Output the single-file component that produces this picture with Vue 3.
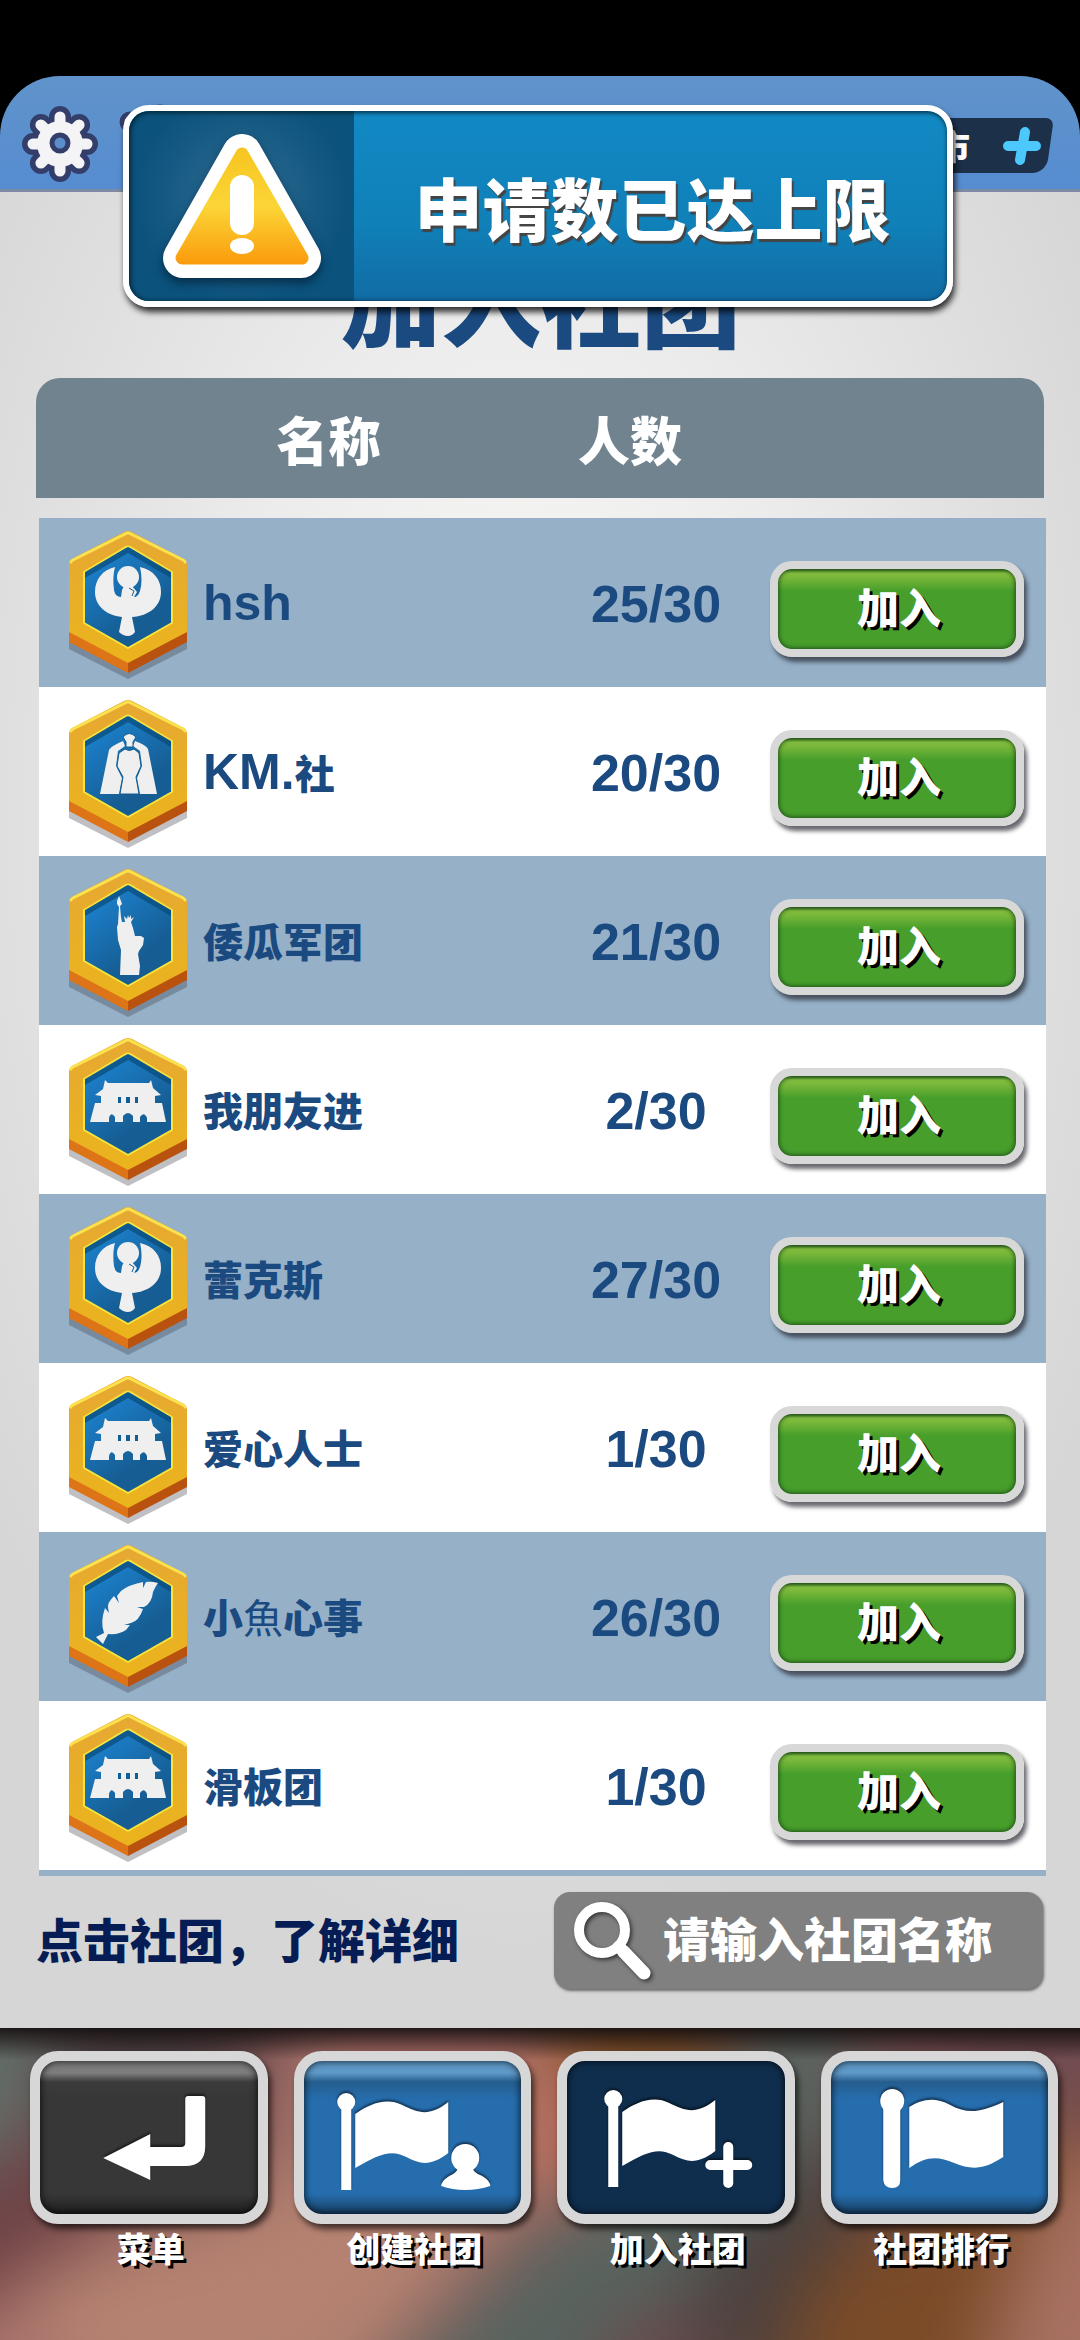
<template>
  <div class="club-page" lang="zh-CN">
    <div class="screen">
      <header class="top-bar">
        <div class="top-left">
          <button class="icon-btn" type="button" aria-label="设置">
            <svg viewBox="0 0 80 80">
              <g stroke="#333f6a" stroke-width="22" stroke-linecap="round">
                <line v-for="a in gearAngles" :key="a" x1="40" y1="40" x2="40" y2="13" :transform="`rotate(${a} 40 40)`" />
              </g>
              <circle cx="40" cy="40" r="28" fill="#333f6a" />
              <g stroke="#f4f4f6" stroke-width="11" stroke-linecap="round">
                <line v-for="a in gearAngles" :key="a" x1="40" y1="40" x2="40" y2="13" :transform="`rotate(${a} 40 40)`" />
              </g>
              <circle cx="40" cy="40" r="23" fill="#f4f4f6" />
              <circle cx="40" cy="39" r="8" fill="#5b8fcb" stroke="#333f6a" stroke-width="5" />
            </svg>
          </button>
          <button class="icon-btn" type="button" aria-label="消息">
            <svg viewBox="0 0 80 80">
              <g fill="#f4f4f6" stroke="#333f6a" stroke-width="5">
                <circle cx="42" cy="44" r="30" />
                <circle cx="12" cy="18" r="8" />
                <circle cx="42" cy="13" r="10" />
              </g>
            </svg>
          </button>
        </div>
        <button class="city" type="button">
          <span>市</span>
          <svg class="plus" viewBox="0 0 40 40">
            <path d="M23 6 18 34M6 20H34" stroke="#4cc8fc" stroke-width="10" stroke-linecap="round" />
          </svg>
        </button>
      </header>

      <main class="panel">
        <h1>加入社团</h1>
        <div class="list">
          <table>
            <colgroup>
              <col class="col-badge" />
              <col />
              <col class="col-count" />
              <col class="col-join" />
            </colgroup>
            <thead>
              <tr>
                <th colspan="2" class="th-name">名称</th>
                <th class="th-count">人数</th>
                <th></th>
              </tr>
            </thead>
            <tbody>
              <tr v-for="(club, i) in clubs" :key="i">
                <td class="badge-cell">
                  <svg class="badge" viewBox="0 0 118 150">
                    <path d="M0 48 59 78 118 48V119L59 149 0 119Z" fill="rgba(60,60,70,0.32)" />
                    <path d="M0 40H59V143L0 112Z" fill="#dd7418" />
                    <path d="M118 40H59V143L118 112Z" fill="#b9520f" />
                    <path d="M55 2Q59 0 63 2L115 29Q118 31 118 34V102L59 133 0 102V34Q0 31 3 29Z" fill="url(#gold)" />
                    <path d="M2 32Q2 31 4 30L56 4Q59 2 62 4L114 30Q116 31 116 32" fill="none" stroke="#fbe24e" stroke-width="3" stroke-linecap="round" />
                    <path d="M55 18Q59 15 63 18L103 42V93L59 118 15 93V42Z" fill="url(#blue)" stroke="#f8e43c" stroke-width="2" stroke-linejoin="round" />
                    <path d="M59 17 102 42V48L59 23 16 48V42Z" fill="#084a78" opacity="0.7" />
                    <g fill="#efeff0">
                      <template v-if="club.badge === 'eagle'">
                        <circle cx="59" cy="47" r="11" />
                        <path d="M46 37C33 40 26 50 26 62C26 76 37 85 53 87L50 102Q54 106 59 106 63 106 66 102L63 87C80 86 92 76 92 62C92 50 85 40 71 37C73 46 73 54 71 61Q69 67 65 67L68 62 63 56H55L53 60 52 67Q46 67 45 60C44 52 44 44 46 37Z" />
                        <path d="M60 58 65 61 63 66" fill="none" stroke="#125d92" stroke-width="1" />
                      </template>
                      <template v-else-if="club.badge === 'robe'">
                        <path d="M31 95 40 51Q42 47 54 42L56 47 49 52 47 67 53 79 50 95ZM88 95 79 50Q77 46 66 42L64 47 71 52 73 67 68 79 71 95Z" />
                        <path d="M56 50 50 54 48 67 54 78 51 95H70L67 78 72 67 70 54 65 50Q60 53 56 50Z" stroke="#125d92" stroke-width="1" />
                        <path d="M54 38Q60 31 67 38L64 43V48H57V43Z" stroke="#125d92" stroke-width="1" />
                      </template>
                      <path
                        v-else-if="club.badge === 'liberty'"
                        d="M50 28 52 33 53 36 51 38 52 49 53 54 56 54 55 48 58 51 59 47 60 50 62 47 62 51 65 49 62 54 64 60 66 68 72 68 75 70 74 77 70 83 69 86 71 98 70 107H51L52 82 49 72 48 59 49 56 50 39 48 36V33Z"
                      />
                      <template v-else-if="club.badge === 'gate'">
                        <path d="M36 43 39 46H80L82 43 84 51 92 58 86 59V66H93L97 85H78V81Q75 74 71 80V85H64V79Q59 73 54 79V85H46V80Q42 74 40 81V85H21L26 66H32V59L26 58 34 52Z" />
                        <path d="M49 60h3v6h-3zM57 60h4v6h-4zM66 60h3v6h-3z" fill="#125d92" />
                      </template>
                      <path
                        v-else
                        d="M89 39Q82 37 77 38L74 44 74 38Q59 41 52 47L48 52 50 59 45 52Q38 59 39 64L40 69 36 64Q31 78 35 89L27 93 34 100 39 90Q50 91 57 86L61 81 55 81 62 79Q70 77 74 65L68 63 75 63Q83 59 84 48Q86 43 89 39Z"
                      />
                    </g>
                  </svg>
                </td>
                <td class="name">
                  <span v-for="(part, k) in club.name" :key="k" :class="part.type">{{ part.text }}</span>
                </td>
                <td class="count">{{ club.members }}/30</td>
                <td class="join-cell">
                  <button class="join" type="button">加入</button>
                </td>
              </tr>
              <tr class="next-row">
                <td></td>
                <td></td>
                <td></td>
                <td></td>
              </tr>
            </tbody>
          </table>
        </div>
        <div class="panel-footer">
          <p>点击社团，了解详细</p>
          <label class="search">
            <svg viewBox="0 0 90 90">
              <g fill="none" stroke="#fff" stroke-width="10" stroke-linecap="round">
                <circle cx="34" cy="34" r="23" />
                <path d="M50 50 51 51" />
                <path d="M55 55 76 77" stroke-width="13" />
              </g>
            </svg>
            <input v-model="keyword" type="text" placeholder="请输入社团名称" aria-label="社团名称" />
          </label>
        </div>
      </main>

      <nav class="bottom-nav">
        <!-- out-of-focus photo behind the buttons -->
        <svg class="nav-bg" viewBox="0 0 1080 312" preserveAspectRatio="none" aria-hidden="true">
          <rect width="1080" height="312" fill="#7c5254" />
          <g filter="url(#soft)">
            <path d="M-80-60H50L40 90 10 160-80 180Z" fill="#63706a" />
            <path d="M50-60H270L210 70 120 120 50 90Z" fill="#4f4346" />
            <path d="M-80 170 60 90 140 190-80 400Z" fill="#6e4246" />
            <path d="M-80 400V320L90 210 280 150 300-20 420-60 560 20 580 130 480 230 330 400Z" fill="#b58271" />
            <path d="M-80 400 20 270 90 400Z" fill="#a8706c" />
            <path d="M330-60H530V60L430 90 320 50Z" fill="#b3716d" />
            <path d="M550-60H730L710 50 560 50Z" fill="#84521f" />
            <path d="M520 50H620V170H520Z" fill="#b2685a" />
            <path d="M340 400 560 190 740 80 740-60H860L850 110 720 230 620 400Z" fill="#57645f" />
            <path d="M600 400 730 190 850 90 880 230 760 400Z" fill="#4a403e" />
            <path d="M570 400 620 290 700 280 720 400Z" fill="#6b484a" />
            <path d="M760 400 810 240 1010 110 1160 100V260L930 400Z" fill="#7b4b28" />
            <path d="M970 400 1010 250 1050 140 1160 100V400Z" fill="#a87162" />
            <path d="M950-60H1160V90H970Z" fill="#714c50" />
          </g>
        </svg>
        <div v-for="item in navItems" :key="item.icon" class="nav-item">
          <button :id="'nav-' + item.icon" type="button" :class="item.icon">
            <svg viewBox="10 10 217 153">
              <path
                v-if="item.icon === 'back'"
                d="M73 107 120 83V96H151Q155 96 155 92V48Q155 45 158 45H172Q175 45 175 48V95Q175 115 155 115H120V129Z"
              />
              <template v-else-if="item.icon === 'create'">
                <circle cx="52" cy="51" r="9" />
                <path d="M47 55H57V139H47Z" />
                <path d="M61 63C75 53 92 46 108 54S135 66 154 51V102C137 115 127 114 112 106S85 103 61 117Z" />
                <circle cx="171" cy="107" r="14" />
                <path d="M164 116H178Q179 122 188 125 196 130 196 135 184 139 171 139T147 135Q147 130 155 125 163 122 164 116Z" />
              </template>
              <template v-else-if="item.icon === 'join-club'">
                <circle cx="56" cy="48" r="9" />
                <path d="M51 52H61V136H51Z" />
                <path d="M65 61C79 51 96 44 112 52S139 64 158 49V100C141 113 131 112 116 104S89 101 65 115Z" />
                <path d="M171 96V132M153 114H190" stroke="#fff" stroke-width="10" stroke-linecap="round" />
              </template>
              <template v-else>
                <circle cx="71" cy="50" r="12" />
                <path d="M62 56H79V129Q79 137 71 137T62 129Z" />
                <path d="M88 56C100 49 112 45 129 54S158 62 182 51V106C162 119 150 119 133 112S105 105 88 117Z" />
              </template>
            </svg>
          </button>
          <label :for="'nav-' + item.icon">{{ item.label }}</label>
        </div>
      </nav>
    </div>

    <div class="toast" role="alert">
      <div class="toast-icon">
        <svg viewBox="0 0 160 144">
          <path d="M80 20 139 124H21Z" fill="#fff" stroke="#fff" stroke-width="40" stroke-linejoin="round" />
          <path d="M80 20 140 124H20Z" fill="url(#warn)" stroke="url(#warn)" stroke-width="13" stroke-linejoin="round" />
          <rect x="68" y="41" width="24" height="60" rx="12" fill="#fff" />
          <ellipse cx="80" cy="112" rx="12" ry="8" fill="#fff" />
        </svg>
      </div>
      <div class="toast-text">申请数已达上限</div>
    </div>

    <!-- shared gradients -->
    <svg class="defs" width="0" height="0" aria-hidden="true">
      <defs>
        <linearGradient id="gold" x1="0" y1="0" x2="0" y2="1">
          <stop offset="0" stop-color="#e6a833" />
          <stop offset="1" stop-color="#ebb41c" />
        </linearGradient>
        <linearGradient id="blue" x1="0" y1="0" x2="0.5" y2="0.8">
          <stop offset="0" stop-color="#1d88d8" />
          <stop offset="1" stop-color="#165d93" />
        </linearGradient>
        <linearGradient id="warn" gradientUnits="userSpaceOnUse" x1="0" y1="14" x2="0" y2="131">
          <stop offset="0" stop-color="#f6c521" />
          <stop offset="0.5" stop-color="#fbd536" />
          <stop offset="1" stop-color="#fb9a0c" />
        </linearGradient>
        <filter id="soft" x="-20%" y="-20%" width="140%" height="140%" color-interpolation-filters="sRGB">
          <feGaussianBlur stdDeviation="38" />
        </filter>
      </defs>
    </svg>
  </div>
</template>

<script setup>
import { ref } from 'vue'

const keyword = ref('')

const gearAngles = [0, 45, 90, 135, 180, 225, 270, 315]

const clubs = [
  { badge: 'eagle', name: [{ text: 'hsh', type: 'latin' }], members: 25 },
  { badge: 'robe', name: [{ text: 'KM.', type: 'latin' }, { text: '社' }], members: 20 },
  { badge: 'liberty', name: [{ text: '倭瓜军团' }], members: 21 },
  { badge: 'gate', name: [{ text: '我朋友进' }], members: 2 },
  { badge: 'eagle', name: [{ text: '蕾克斯' }], members: 27 },
  { badge: 'gate', name: [{ text: '爱心人士' }], members: 1 },
  { badge: 'feather', name: [{ text: '小' }, { text: '魚', type: 'thin' }, { text: '心事' }], members: 26 },
  { badge: 'gate', name: [{ text: '滑板团' }], members: 1 }
]

const navItems = [
  { icon: 'back', label: '菜单' },
  { icon: 'create', label: '创建社团' },
  { icon: 'join-club', label: '加入社团' },
  { icon: 'rank', label: '社团排行' }
]
</script>

<style>
body {
  background: #000;
}
</style>

<style scoped>
* {
  box-sizing: border-box;
}

.club-page {
  position: relative;
  display: flex;
  height: 100vh;
  padding-top: 76px;
  background: #000;
  font-family: "Liberation Sans", "Noto Sans CJK SC", sans-serif;
  font-weight: 900;
}

button,
input {
  font: inherit;
  border: 0;
  padding: 0;
}

svg {
  display: block;
}

.screen {
  flex: 1;
  display: flex;
  flex-direction: column;
  border-radius: 60px 60px 0 0;
  overflow: hidden;
}

.top-bar {
  display: flex;
  justify-content: space-between;
  height: 116px;
  padding: 28px 30px 0 20px;
  background: linear-gradient(#6093ca, #568dd1);
  border-bottom: 3px solid #7c8ba3;
}

.top-left {
  display: flex;
  gap: 18px;
}

.icon-btn {
  width: 80px;
  height: 80px;
  background: none;
}

.city {
  position: relative;
  z-index: 0;
  display: flex;
  align-items: center;
  justify-content: flex-end;
  gap: 32px;
  width: 160px;
  height: 55px;
  margin-top: 14px;
  padding-right: 8px;
  background: none;
  color: #fff;
  font-size: 34px;
}

.city::before {
  content: '';
  position: absolute;
  inset: 0;
  z-index: -1;
  border-radius: 8px 8px 14px 8px;
  background: #1c304a;
  transform: skewX(-8deg);
}

.plus {
  width: 40px;
  height: 40px;
}

.panel {
  flex: 1;
  display: flex;
  flex-direction: column;
  min-height: 0;
  padding: 63px 34px 39px 36px;
  background: radial-gradient(ellipse 62% 62% at 48% 34%, #fafaf8, #ececec 45%, #d6d6d6);
}

h1 {
  margin: 0 0 23px;
  font-size: 100px;
  line-height: 100px;
  font-weight: 900;
  text-align: center;
  color: #1a4a80;
}

.list {
  flex: 1;
  min-height: 0;
  overflow: hidden;
}

table {
  width: 100%;
  table-layout: fixed;
  border-collapse: separate;
  border-spacing: 0;
}

.col-badge {
  width: 164px;
}

.col-count {
  width: 222px;
}

.col-join {
  width: 279px;
}

th {
  height: 120px;
  padding: 10px 0 0;
  background: #70838f;
  background-clip: padding-box;
  color: #fff;
  font-size: 52px;
  line-height: 60px;
  font-weight: 900;
}

th:first-child {
  border-top-left-radius: 24px;
}

th:last-child {
  border-top-right-radius: 24px;
  border-right: 2px solid transparent;
}

.th-name {
  padding-left: 76px;
}

.th-count {
  padding-right: 52px;
}

tbody::before {
  content: '';
  display: block;
  height: 20px;
}

td {
  height: 169px;
  padding: 0;
  background: #fff;
  background-clip: padding-box;
  color: #1a4a80;
}

tr:nth-child(odd) td {
  background-color: #95b0c7;
}

td:first-child {
  border-left: 3px solid transparent;
}

.badge-cell {
  padding: 4px 0 0 30px;
}

.badge {
  width: 118px;
  height: 150px;
}

.name {
  padding: 4px 0 0 3px;
  font-size: 40px;
  line-height: 60px;
  white-space: nowrap;
}

.latin {
  font-size: 50px;
}

.thin {
  font-weight: 400;
}

.count {
  padding-top: 2px;
  font-size: 52px;
  line-height: 60px;
  text-align: center;
}

.join-cell {
  padding: 12px 0 0 3px;
}

.join {
  display: block;
  width: 254px;
  height: 96px;
  padding: 2px 0 0 4px;
  border: 8px solid #d8d8d8;
  border-radius: 22px;
  background: linear-gradient(#35701f, #84c040 4px, #7ab83a 8px, #479e2b 22px, #479e2b);
  box-shadow: 3px 5px 4px rgba(40, 40, 50, 0.7), inset 0 0 4px 1px rgba(20, 60, 20, 0.8);
  color: #fff;
  font-size: 42px;
  line-height: 60px;
  text-shadow: 3px 3px 0 #000;
}

.panel-footer {
  display: flex;
  align-items: center;
  justify-content: space-between;
  margin-top: 16px;
  padding-right: 3px;
}

p {
  margin: 0;
  padding-top: 2px;
  color: #061c54;
  font-size: 47px;
  line-height: 60px;
  white-space: nowrap;
}

.search {
  display: flex;
  align-items: center;
  width: 489px;
  height: 97px;
  padding-left: 14px;
  border-radius: 16px;
  background: #808080;
  box-shadow: 1px 2px 3px rgba(0, 0, 0, 0.5);
}

.search svg {
  flex: none;
  width: 90px;
  height: 90px;
  filter: drop-shadow(2px 2px 2px rgba(0, 0, 0, 0.6));
}

.search input {
  flex: 1;
  min-width: 0;
  margin-left: 5px;
  background: none;
  outline: 0;
  color: #fff;
  font-size: 47px;
  line-height: 60px;
}

.search input::placeholder {
  color: #fff;
  opacity: 1;
}

.bottom-nav {
  position: relative;
  z-index: 0;
  display: grid;
  grid-template-columns: repeat(4, 1fr);
  gap: 26px;
  height: 312px;
  padding: 23px 22px 0 30px;
  overflow: hidden;
}

.nav-bg {
  position: absolute;
  inset: 0;
  z-index: -1;
  width: 100%;
  height: 100%;
}

/* shade under the panel edge */
.bottom-nav::after {
  content: '';
  position: absolute;
  inset: 0 0 auto;
  z-index: -1;
  height: 32px;
  background: linear-gradient(rgba(20, 14, 14, 0.9), rgba(20, 14, 14, 0));
}

.nav-item {
  display: flex;
  flex-direction: column;
  align-items: center;
}

.nav-item button {
  width: 100%;
  height: 173px;
  border: 10px solid #d7d7d7;
  border-radius: 28px;
  box-shadow: 3px 5px 6px rgba(0, 0, 0, 0.65), inset 0 0 7px 1px rgba(0, 0, 0, 0.7);
  background: linear-gradient(#5f99c8, #5f99c8 12px, #255d8e 21px, #266dad 38px, #266dad 133px, #163e62);
}

.nav-item .back {
  background: linear-gradient(#7d7d7d, #7d7d7d 12px, #3b3b3b 21px, #373737 38px, #373737 133px, #1e1e1e);
}

.nav-item .join-club {
  background: #0f2e4d;
}

.nav-item svg {
  width: 100%;
  height: 153px;
  fill: #fff;
  filter: drop-shadow(0 -2px 1px rgba(0, 0, 0, 0.5));
}

.nav-item label {
  padding: 1px 0 0 4px;
  color: #fff;
  font-size: 34px;
  line-height: 50px;
  text-shadow: 3px 3px 0 #000;
}

.toast {
  position: absolute;
  top: 105px;
  left: 123px;
  right: 127px;
  z-index: 2;
  display: flex;
  height: 202px;
  border: 6px solid #fff;
  border-radius: 26px;
  overflow: hidden;
  background: linear-gradient(#1289c4, #1080b8 60%, #126ba4);
  box-shadow: 2px 5px 6px rgba(0, 0, 0, 0.8);
}

.toast::after {
  content: '';
  position: absolute;
  inset: 0;
  border-radius: 20px;
  box-shadow: inset 1px 1px 4px 1px rgba(0, 30, 40, 0.8);
}

.toast-icon {
  display: grid;
  place-items: center;
  width: 225px;
  background: radial-gradient(circle at 50% 45%, #2f6c92, #0b527c 70%);
}

.toast-icon svg {
  width: 160px;
  height: 144px;
  filter: drop-shadow(0 5px 5px rgba(0, 20, 40, 0.6));
}

.toast-text {
  flex: 1;
  display: flex;
  align-items: center;
  justify-content: center;
  padding-left: 4px;
  color: #fff;
  font-size: 68px;
  white-space: nowrap;
  text-shadow: 2px 3px 1px #444;
}

.defs {
  position: absolute;
}
</style>
